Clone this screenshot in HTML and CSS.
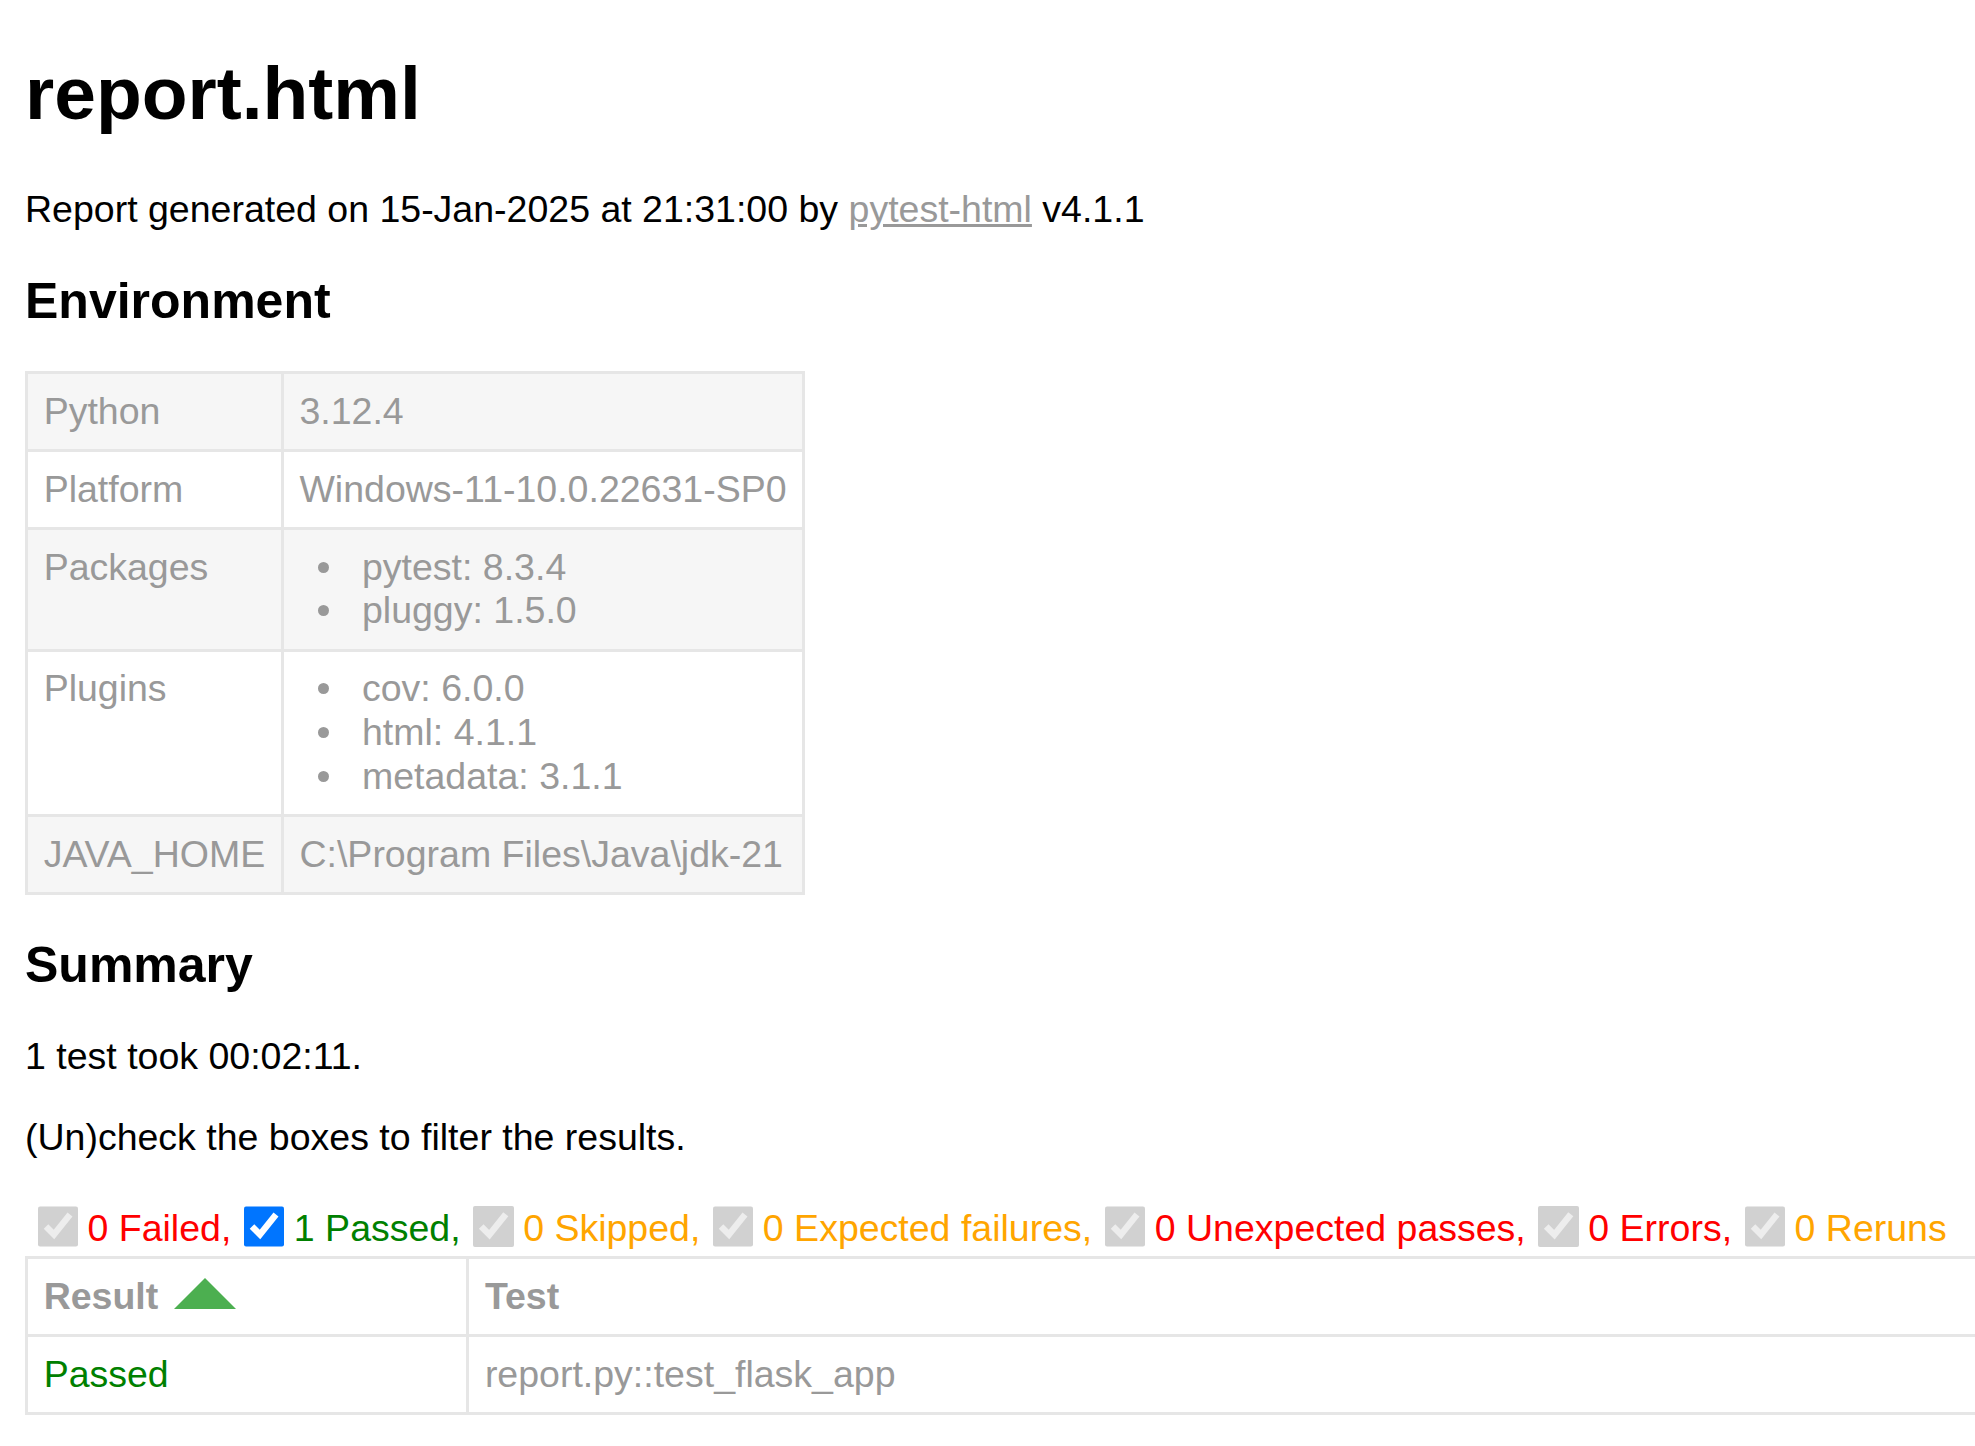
FILE: index.html
```html
<!DOCTYPE html>
<html>
<head>
<meta charset="utf-8">
<title>report.html</title>
<link rel="stylesheet" href="styles.css">
</head>
<body>
<h1 class="title">report.html</h1>
<p class="text">Report generated on 15-Jan-2025 at 21:31:00 by <a class="link" href="#">pytest-html</a> v4.1.1</p>
<h2 class="heading">Environment</h2>
<table class="environment">
  <tr class="env-row odd"><td class="env-cell">Python</td><td class="env-cell">3.12.4</td></tr>
  <tr class="env-row"><td class="env-cell">Platform</td><td class="env-cell">Windows-11-10.0.22631-SP0</td></tr>
  <tr class="env-row odd"><td class="env-cell">Packages</td><td class="env-cell"><ul class="env-list"><li class="env-item">pytest: 8.3.4</li><li class="env-item">pluggy: 1.5.0</li></ul></td></tr>
  <tr class="env-row"><td class="env-cell">Plugins</td><td class="env-cell"><ul class="env-list"><li class="env-item">cov: 6.0.0</li><li class="env-item">html: 4.1.1</li><li class="env-item">metadata: 3.1.1</li></ul></td></tr>
  <tr class="env-row odd"><td class="env-cell">JAVA_HOME</td><td class="env-cell">C:\Program Files\Java\jdk-21</td></tr>
</table>
<div class="summary">
  <h2 class="heading">Summary</h2>
  <p class="text">1 test took 00:02:11.</p>
  <p class="text">(Un)check the boxes to filter the results.</p>
  <div class="filters"><input class="filter" type="checkbox" checked disabled><span class="label failed">0 Failed,</span><input class="filter" type="checkbox" checked><span class="label passed">1 Passed,</span><input class="filter" type="checkbox" checked disabled><span class="label skipped">0 Skipped,</span><input class="filter" type="checkbox" checked disabled><span class="label xfailed">0 Expected failures,</span><input class="filter" type="checkbox" checked disabled><span class="label xpassed">0 Unexpected passes,</span><input class="filter" type="checkbox" checked disabled><span class="label error">0 Errors,</span><input class="filter" type="checkbox" checked disabled><span class="label rerun">0 Reruns</span></div>
</div>
<table class="results-table">
  <thead>
    <tr>
      <th class="res-cell col-result sortable asc">Result</th>
      <th class="res-cell col-test">Test</th>
    </tr>
  </thead>
  <tbody>
    <tr>
      <td class="res-cell col-result passed-text">Passed</td>
      <td class="res-cell col-test">report.py::test_flask_app</td>
    </tr>
  </tbody>
</table>
</body>
</html>
```
FILE: styles.css
```css
html {
  overflow: hidden;
  background: #fff;
}

body {
  margin: 0 25px 25px;
  font-family: "Liberation Sans", Arial, Helvetica, sans-serif;
  font-size: 37.5px;
  line-height: 43.75px;
  min-width: 2500px;
  color: #999;
}

.title {
  font-size: 75px;
  line-height: 87.5px;
  margin: 50.25px 0;
  color: #000;
}

.heading {
  font-size: 50px;
  line-height: 56.25px;
  margin: 41.5px 0;
  color: #000;
}

.text {
  margin: 37.5px 0;
  color: #000;
}

.link {
  color: #999;
}

.environment,
.results-table {
  border-collapse: collapse;
}

.env-cell {
  padding: 15.625px;
  border: 3.125px solid #e6e6e6;
  vertical-align: top;
}

.env-row.odd {
  background-color: #f6f6f6;
}

.env-list {
  margin: 0;
  padding: 0 62.5px;
  list-style: none;
}

.env-item {
  position: relative;
}

.env-item::before {
  content: "";
  position: absolute;
  left: -44px;
  top: 16px;
  width: 11px;
  height: 11px;
  border-radius: 50%;
  background: #999;
}

.filters {
  display: flex;
  align-items: flex-start;
  white-space: nowrap;
}

.filter {
  flex: none;
  width: 40.625px;
  height: 40.625px;
  margin: 9.375px 9.375px 9.375px 12.5px;
}

.label {
  margin-top: 10.4px;
}

.failed,
.xpassed,
.error {
  color: red;
}

.passed,
.passed-text {
  color: green;
}

.skipped,
.xfailed,
.rerun {
  color: orange;
}

.results-table {
  border: 3.125px solid #e6e6e6;
  color: #999;
  width: 100%;
}

.res-cell {
  padding: 15.625px;
  border: 3.125px solid #e6e6e6;
  text-align: left;
}

th.res-cell {
  font-weight: bold;
}

.col-result {
  width: 407px;
}

.sortable.asc::after {
  content: " ";
  position: relative;
  left: 15.625px;
  bottom: 39px;
  border: 31.25px solid #4caf50;
  border-top: 0;
  border-left-color: transparent;
  border-right-color: transparent;
}
```
